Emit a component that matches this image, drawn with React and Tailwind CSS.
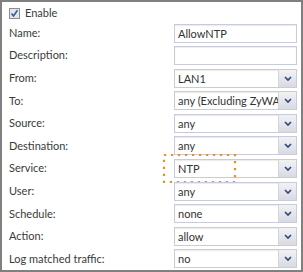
import React from 'react';

const rows = [
  { label: 'Name:', value: 'AllowNTP', type: 'text' },
  { label: 'Description:', value: '', type: 'text' },
  { label: 'From:', value: 'LAN1', type: 'select' },
  { label: 'To:', value: 'any (Excluding ZyWALL)', type: 'select' },
  { label: 'Source:', value: 'any', type: 'select' },
  { label: 'Destination:', value: 'any', type: 'select' },
  { label: 'Service:', value: 'NTP', type: 'select', marked: true },
  { label: 'User:', value: 'any', type: 'select' },
  { label: 'Schedule:', value: 'none', type: 'select' },
  { label: 'Action:', value: 'allow', type: 'select' },
  { label: 'Log matched traffic:', value: 'no', type: 'select' },
];

function Chevron() {
  return (
    <svg width="8" height="5" viewBox="0 0 8 5">
      <path d="M1 1 L4 4 L7 1" fill="none" stroke="#2b4a80" strokeWidth="1.7" />
    </svg>
  );
}

function Field({ row }) {
  return (
    <div className="relative flex h-[19px] w-[123px] items-stretch border border-[#c9ccd8] bg-white shadow-[inset_0_1px_1px_rgba(0,0,0,0.08)]">
      <span className="flex-1 overflow-hidden whitespace-nowrap pl-[3px] text-[11px] leading-[17px] text-[#333]">
        {row.value}
      </span>
      {row.type === 'select' && (
        <span className="flex w-[18px] items-center justify-center border-l border-[#d3d5de] bg-gradient-to-b from-[#f2f2f5] to-[#d9dae2]">
          <Chevron />
        </span>
      )}
      {row.marked && (
        <svg className="pointer-events-none absolute left-[-12px] top-[-6px]" width="74" height="30" viewBox="0 0 74 30">
          <rect x="1" y="1" width="71" height="27" fill="none" stroke="#f08c1a" strokeWidth="2.2" strokeDasharray="2.2 4.8" />
        </svg>
      )}
    </div>
  );
}

export default function App() {
  return (
    <div
      className="h-[272px] w-[303px] overflow-hidden border-2 border-[#808080] bg-white text-[#3a3a3a]"
      style={{ fontFamily: 'Lato, "Open Sans", sans-serif' }}
    >
      <div className="flex items-center gap-[5px] pl-[7px] pt-[4px]">
        <span className="flex h-[11px] w-[11px] items-center justify-center border border-[#8d8d8d] bg-[#e6e6e9]">
          <svg width="9" height="9" viewBox="0 0 9 9">
            <path d="M1.5 4.5 L3.5 7 L7.5 1.2" fill="none" stroke="#3559a8" strokeWidth="1.6" />
          </svg>
        </span>
        <span className="text-[11px] leading-[14px]">Enable</span>
      </div>
      <div className="mt-[3.5px] flex flex-col gap-[3.6px] pl-[7px]">
        {rows.map(row => (
          <div key={row.label} className="flex h-[19px] items-center justify-between pr-[4px]">
            <span className="text-[11px]">{row.label}</span>
            <Field row={row} />
          </div>
        ))}
      </div>
    </div>
  );
}
